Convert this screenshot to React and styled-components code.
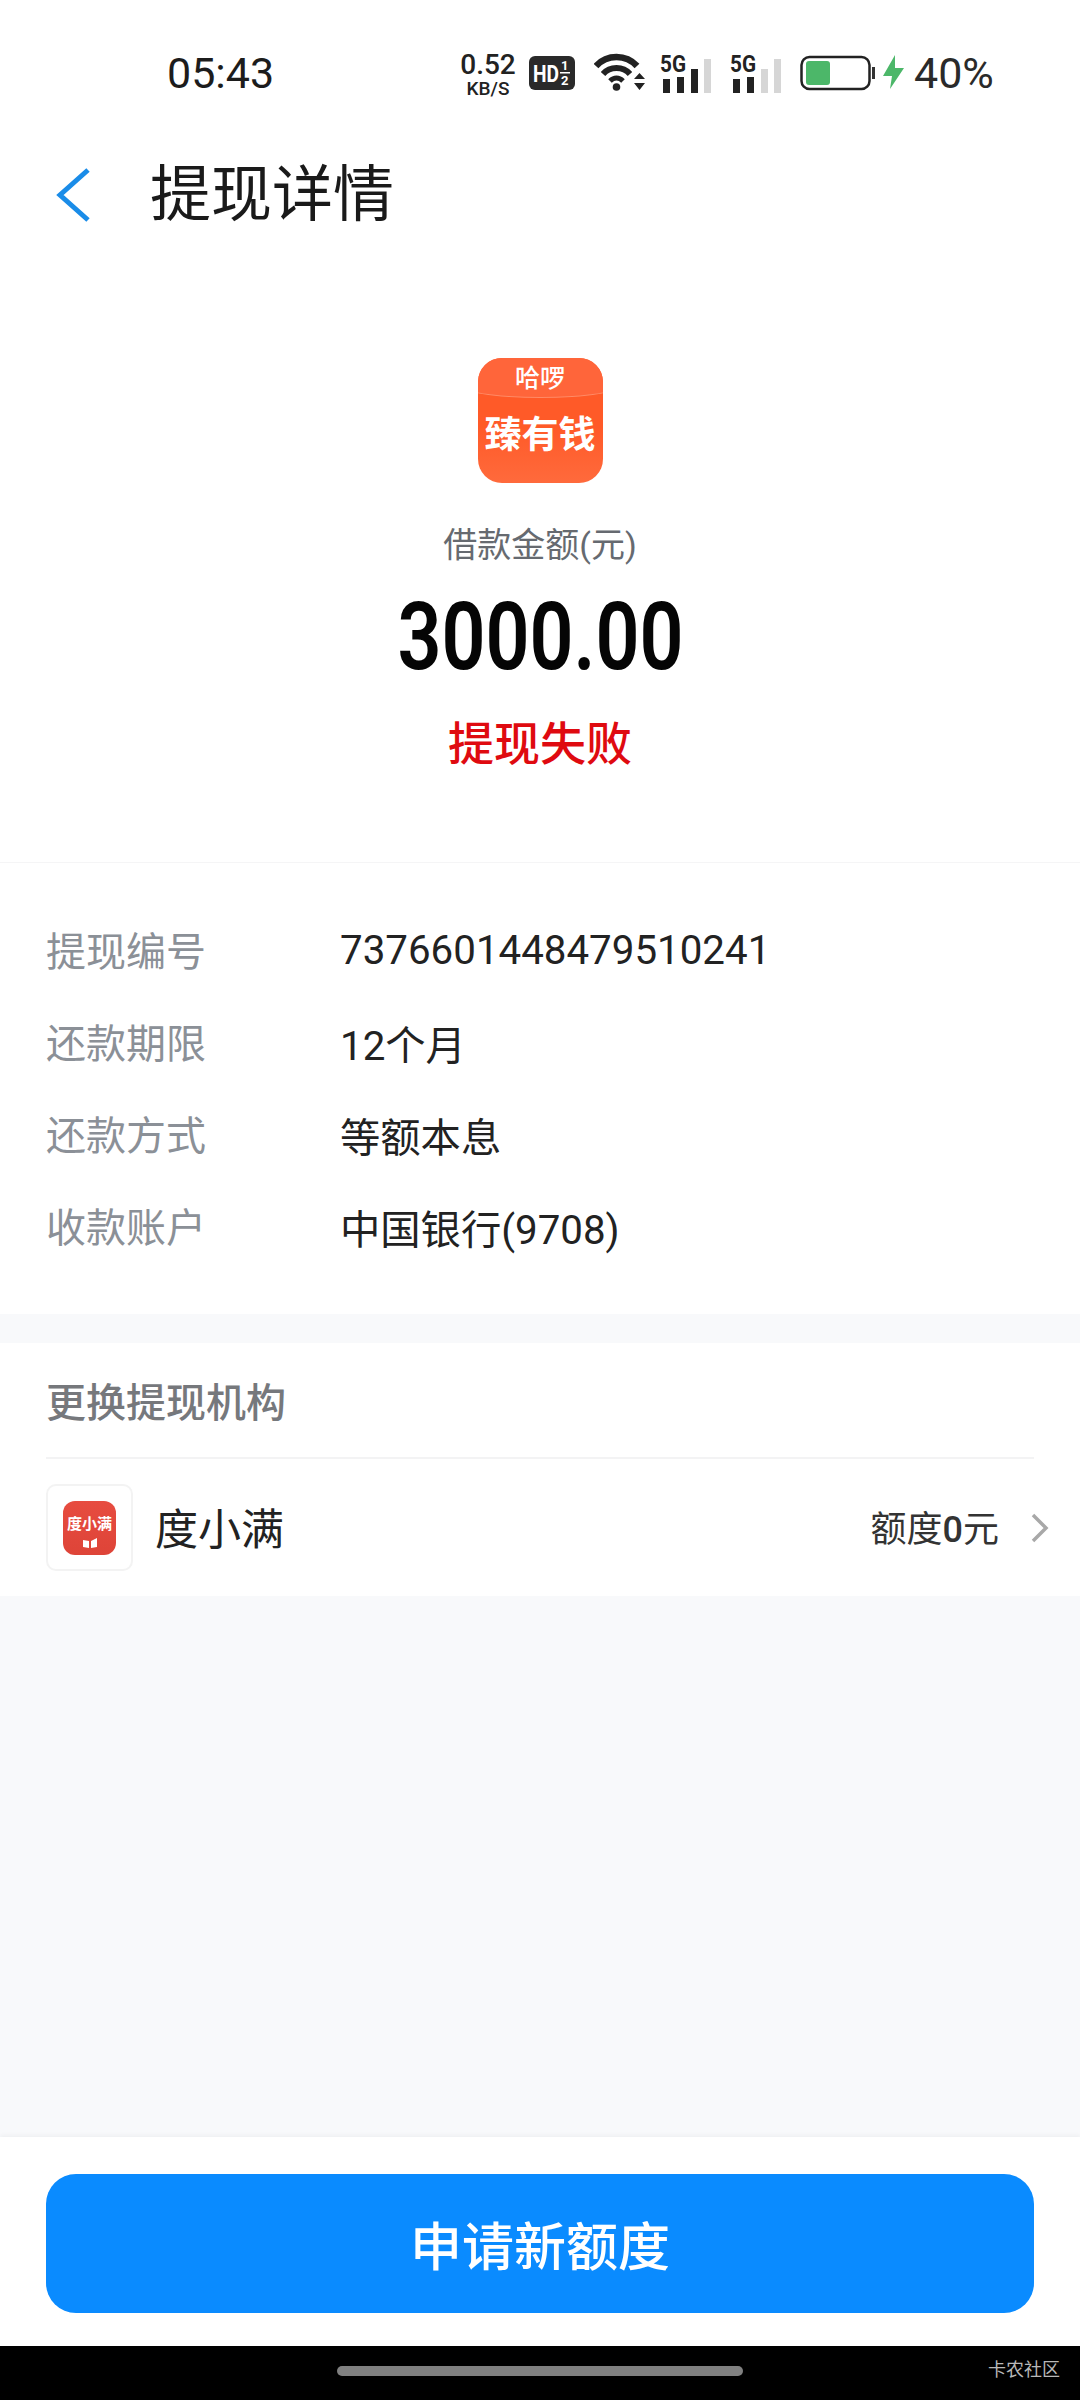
import React from 'react'
import styled, { createGlobalStyle } from 'styled-components'

const GlobalStyle = createGlobalStyle`
  html, body {
    margin: 0;
    padding: 0;
    background: #fff;
    font-family: Roboto, "Noto Sans CJK SC", sans-serif;
  }
  * { box-sizing: border-box; }
`

const Page = styled.div`
  width: 1080px;
  height: 2400px;
  display: flex;
  flex-direction: column;
  background: #f8f9fb;
  overflow: hidden;
`

const Top = styled.div`
  background: #fff;
`

const StatusBar = styled.div`
  height: 146px;
  padding-left: 167px;
  display: flex;
  align-items: center;
  color: #222;
`

const Time = styled.div`
  width: 291px;
  font-size: 43px;
  line-height: 50px;
  color: #1c1c1c;
`

const Speed = styled.div`
  width: 60px;
  margin-top: 4px;
  text-align: center;
  color: #222;
  b {
    display: block;
    font-size: 28px;
    line-height: 27px;
    font-weight: 500;
  }
  span {
    display: block;
    font-size: 19px;
    line-height: 22px;
    font-weight: 500;
  }
`

const HdBadge = styled.svg`
  width: 46px;
  height: 34px;
  margin-left: 11px;
`

const Wifi = styled.svg`
  width: 52px;
  height: 40px;
  margin-left: 19px;
`

const Signal = styled.svg`
  width: 54px;
  height: 46px;
  margin-left: ${p => p.$gap}px;
`

const Battery = styled.svg`
  width: 106px;
  height: 40px;
  margin-left: 16px;
`

const Percent = styled.div`
  margin-left: 8px;
  font-size: 43px;
  line-height: 50px;
  color: #2a2a2a;
`

const NavBar = styled.div`
  height: 98px;
  padding-left: 52px;
  display: flex;
  align-items: center;
`

const BackIcon = styled.svg`
  width: 42px;
  height: 60px;
`

const Title = styled.h1`
  margin: 0 0 0 56px;
  font-size: 61px;
  line-height: 80px;
  font-weight: 400;
  color: #1a1a1a;
`

const Hero = styled.div`
  padding-top: 114px;
  height: 619px;
  display: flex;
  flex-direction: column;
  align-items: center;
  border-bottom: 1px solid #f5f5f6;
`

const Logo = styled.div`
  position: relative;
  width: 125px;
  height: 125px;
  border-radius: 24px;
  overflow: hidden;
  color: #fff;
  background: linear-gradient(180deg, #ff5a28 0%, #ff5a28 55%, #ff6a3c 100%);
`

const LogoFlap = styled.div`
  position: absolute;
  left: -20px;
  right: -20px;
  top: -50px;
  height: 90px;
  border-radius: 0 0 50% 50% / 0 0 14px 14px;
  background: #ff653a;
  border-bottom: 1px solid #ff8a66;
`

const LogoTop = styled.div`
  position: relative;
  text-align: center;
  font-size: 25px;
  line-height: 30px;
  font-weight: 500;
  padding-top: 6px;
`

const LogoMain = styled.div`
  position: relative;
  margin-top: 18px;
  text-align: center;
  font-size: 37px;
  line-height: 48px;
  font-weight: 700;
  white-space: nowrap;
`

const AmountLabel = styled.div`
  margin-top: 38px;
  font-size: 34px;
  line-height: 48px;
  color: #666a70;
`

const Amount = styled.div`
  margin-top: 18px;
  font-size: 94px;
  line-height: 100px;
  font-weight: 600;
  color: #050505;
  transform: scaleX(0.82);
`

const Failed = styled.div`
  margin-top: 26px;
  font-size: 46px;
  line-height: 62px;
  font-weight: 500;
  color: #df0a10;
`

const Details = styled.div`
  padding: 41px 46px 0;
  height: 451px;
  display: flex;
  flex-direction: column;
`

const Row = styled.div`
  height: 92px;
  display: flex;
  align-items: center;
  font-size: 40px;
`

const RowLabel = styled.div`
  width: 294px;
  margin-top: -2px;
  color: #8b9097;
`

const RowValue = styled.div`
  font-size: 40.3px;
  color: #222;
`

const Switcher = styled.div`
  margin-top: 29px;
  height: 253px;
  padding: 0 46px;
  background: #fff;
`

const SwitcherTitle = styled.div`
  height: 116px;
  display: flex;
  align-items: center;
  border-bottom: 2px solid #f3f3f4;
  font-size: 40px;
  font-weight: 500;
  color: #76787c;
`

const Lender = styled.div`
  height: 137px;
  display: flex;
  align-items: center;
`

const LenderIconBox = styled.div`
  width: 87px;
  height: 87px;
  border: 2px solid #f3f3f3;
  border-radius: 10px;
  display: flex;
  align-items: center;
  justify-content: center;
`

const LenderIcon = styled.div`
  width: 53px;
  height: 54px;
  border-radius: 12px;
  background: linear-gradient(180deg, #e74c40 0%, #de4438 100%);
  color: #fff;
  display: flex;
  flex-direction: column;
  align-items: center;
  font-size: 15px;
  line-height: 20px;
  font-weight: 700;
  white-space: nowrap;
  padding-top: 13px;
  svg {
    margin-top: 4px;
  }
`

const LenderName = styled.div`
  margin-left: 22px;
  margin-bottom: 3px;
  font-size: 43px;
  color: #222;
`

const Quota = styled.div`
  margin-left: auto;
  margin-bottom: 4px;
  font-size: 36px;
  color: #333;
  b {
    font-weight: 500;
  }
`

const Chevron = styled.svg`
  width: 20px;
  height: 32px;
  margin-left: 31px;
  margin-right: -16px;
`

const Spacer = styled.div`
  flex: 1;
`

const Footer = styled.div`
  height: 209px;
  padding: 37px 46px 0;
  background: #fff;
  box-shadow: 0 -2px 4px rgba(0, 0, 0, 0.04);
`

const ApplyButton = styled.button`
  width: 100%;
  height: 139px;
  border: 0;
  border-radius: 30px;
  background: #0a8bff;
  color: #fff;
  font-family: inherit;
  font-size: 52px;
  font-weight: 500;
`

const NavStrip = styled.div`
  position: relative;
  height: 54px;
  background: #000;
  display: flex;
  justify-content: center;
  padding-top: 20px;
`

const HomeBar = styled.div`
  width: 406px;
  height: 10px;
  border-radius: 5px;
  background: #808080;
`

const Watermark = styled.div`
  position: absolute;
  right: 20px;
  top: 11px;
  font-size: 18px;
  line-height: 26px;
  color: #b8b8b8;
`

const rows = [
  ['提现编号', '7376601448479510241'],
  ['还款期限', '12个月'],
  ['还款方式', '等额本息'],
  ['收款账户', '中国银行(9708)'],
]

const SignalIcon = ({ active, gap }) => {
  const bars = [
    { x: 3, y: 20, h: 14 },
    { x: 17, y: 18, h: 16 },
    { x: 31, y: 10, h: 24 },
    { x: 44, y: 0, h: 34 },
  ]
  return (
    <Signal $gap={gap} viewBox="0 -6 54 46">
      <text x="0" y="16" fontFamily="Roboto" fontSize="23" fontWeight="700" fill="#222" textLength="26" lengthAdjust="spacingAndGlyphs">5G</text>
      {bars.map((b, i) => (
        <rect key={b.x} x={b.x} y={b.y + 3} width="7" height={b.h} fill={i < active ? '#222' : '#d6d6d6'} />
      ))}
    </Signal>
  )
}

const App = () => {
  return (
    <Page>
      <GlobalStyle />
      <Top>
        <StatusBar>
          <Time>05:43</Time>
          <Speed>
            <b>0.52</b>
            <span>KB/S</span>
          </Speed>
          <HdBadge viewBox="0 0 46 34">
            <rect width="46" height="34" rx="6" fill="#2a2a2a" />
            <text x="4" y="26" fontFamily="Roboto" fontSize="24" fontWeight="700" fill="#fff" textLength="26" lengthAdjust="spacingAndGlyphs">HD</text>
            <text x="32" y="14" fontFamily="Roboto" fontSize="13" fontWeight="700" fill="#fff">1</text>
            <rect x="31" y="16" width="10" height="1.5" fill="#fff" />
            <text x="32" y="29" fontFamily="Roboto" fontSize="13" fontWeight="700" fill="#fff">2</text>
          </HdBadge>
          <Wifi viewBox="0 0 52 40">
            <path d="M2 13 C13 1 32 1 43 13" fill="none" stroke="#222" strokeWidth="6.5" />
            <path d="M9 21 C16 13 29 13 36 21" fill="none" stroke="#222" strokeWidth="6" />
            <path d="M16 28 C20 24 25 24 29 28" fill="none" stroke="#222" strokeWidth="5" />
            <circle cx="22.5" cy="34" r="3.8" fill="#222" />
            <path d="M40 26 L45.5 20 L51 26 Z M40 30 L51 30 L45.5 37 Z" fill="#222" />
          </Wifi>
          <SignalIcon active={3} gap={14} />
          <SignalIcon active={2} gap={16} />
          <Battery viewBox="0 0 106 40">
            <rect x="1.5" y="4" width="68" height="32" rx="8" fill="none" stroke="#222" strokeWidth="2.5" />
            <rect x="6" y="8" width="24" height="24" rx="3" fill="#4cb769" />
            <rect x="72" y="14" width="3" height="12" fill="#333" />
            <path d="M95 2 L83 23 L92 23 L90 36 L104 15 L95 15 Z" fill="#4cb769" />
          </Battery>
          <Percent>40%</Percent>
        </StatusBar>
        <NavBar>
          <BackIcon viewBox="0 0 42 60">
            <path d="M36 5 L8 30 L36 55" fill="none" stroke="#1a8ce8" strokeWidth="5" />
          </BackIcon>
          <Title>提现详情</Title>
        </NavBar>
        <Hero>
          <Logo>
            <LogoFlap />
            <LogoTop>哈啰</LogoTop>
            <LogoMain>臻有钱</LogoMain>
          </Logo>
          <AmountLabel>借款金额(元)</AmountLabel>
          <Amount>3000.00</Amount>
          <Failed>提现失败</Failed>
        </Hero>
        <Details>
          {rows.map(([label, value]) => (
            <Row key={label}>
              <RowLabel>{label}</RowLabel>
              <RowValue>{value}</RowValue>
            </Row>
          ))}
        </Details>
      </Top>
      <Switcher>
        <SwitcherTitle>更换提现机构</SwitcherTitle>
        <Lender>
          <LenderIconBox>
            <LenderIcon>
              度小满
              <svg width="14" height="10" viewBox="0 0 14 10">
                <path d="M0 2 L6 3 V10 L0 9 Z M8 3 L14 0 V9 L8 10 Z" fill="#fff" />
              </svg>
            </LenderIcon>
          </LenderIconBox>
          <LenderName>度小满</LenderName>
          <Quota>额度<b>0</b>元</Quota>
          <Chevron viewBox="0 0 20 32">
            <path d="M3 3 L16 16 L3 29" fill="none" stroke="#a8a8a8" strokeWidth="3.5" />
          </Chevron>
        </Lender>
      </Switcher>
      <Spacer />
      <Footer>
        <ApplyButton>申请新额度</ApplyButton>
      </Footer>
      <NavStrip>
        <HomeBar />
        <Watermark>卡农社区</Watermark>
      </NavStrip>
    </Page>
  )
}

export default App
